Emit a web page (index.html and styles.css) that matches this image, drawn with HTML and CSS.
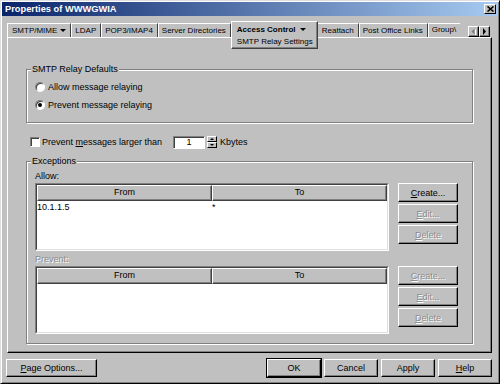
FILE: index.html
```html
<!DOCTYPE html>
<html lang="en">
<head>
    <meta charset="UTF-8">
    <title>Properties of WWWGWIA</title>
    <link rel="stylesheet" href="styles.css">
</head>
<body>
    <div class="window">
        <div class="titlebar">
            <span>Properties of WWWGWIA</span>
            <span class="close-btn">
                <svg width="7" height="6" viewBox="0 0 7 6"><path d="M0.5 0.5 L6.5 5.5 M6.5 0.5 L0.5 5.5" stroke="#000" stroke-width="1.6"/></svg>
            </span>
        </div>

        <div class="tabstrip">
            <div class="tab tab-first">SMTP/MIME <span class="caret"></span></div>
            <div class="tab">LDAP</div>
            <div class="tab">POP3/IMAP4</div>
            <div class="tab">Server Directories</div>
            <div class="tab tab-active">
                <div class="tab-main">Access Control <span class="caret"></span></div>
                <div>SMTP Relay Settings</div>
            </div>
            <div class="tab">Reattach</div>
            <div class="tab">Post Office Links</div>
            <div class="tab tab-clipped">Group\</div>
            <div class="tab-arrows">
                <span class="arrow-btn">
                    <svg width="5" height="7" viewBox="0 0 5 7"><path d="M3.5 0.5 L0.5 3.5 L3.5 6.5 Z" fill="#808080"/><path d="M4.5 1.5 L4.5 7" stroke="#fff"/></svg>
                </span>
                <span class="arrow-btn">
                    <svg width="5" height="7" viewBox="0 0 5 7"><path d="M1 0 L4 3.5 L1 7 Z" fill="#000"/></svg>
                </span>
            </div>
        </div>

        <div class="panel">
            <div class="group relay-group">
                <div class="group-title">SMTP Relay Defaults</div>
                <div class="option"><span class="radio"></span>Allow message relaying</div>
                <div class="option"><span class="radio checked"></span>Prevent message relaying</div>
            </div>

            <div class="size-row">
                <span class="checkbox"></span>
                <span>Prevent <u>m</u>essages larger than</span>
                <span class="spin-input">1</span>
                <span class="spin-btns">
                    <span class="spin-half"><span class="tri-up"></span></span>
                    <span class="spin-half"><span class="tri-down"></span></span>
                </span>
                <span class="unit">Kbytes</span>
            </div>

            <div class="group exceptions">
                <div class="group-title">Exceptions</div>

                <div class="list-label">Allow:</div>
                <div class="list-row">
                    <div class="list">
                        <div class="list-inner">
                            <div class="list-head">
                                <div class="head-cell">From</div>
                                <div class="head-cell">To</div>
                            </div>
                            <div class="list-item">
                                <div class="cell">10.1.1.5</div>
                                <div class="cell">*</div>
                            </div>
                        </div>
                    </div>
                    <div class="side-buttons">
                        <button class="btn"><u>C</u>reate...</button>
                        <button class="btn disabled"><u>E</u>dit...</button>
                        <button class="btn disabled"><u>D</u>elete</button>
                    </div>
                </div>

                <div class="list-label disabled-text">Prevent:</div>
                <div class="list-row">
                    <div class="list">
                        <div class="list-inner">
                            <div class="list-head">
                                <div class="head-cell">From</div>
                                <div class="head-cell">To</div>
                            </div>
                        </div>
                    </div>
                    <div class="side-buttons">
                        <button class="btn disabled"><u>C</u>reate...</button>
                        <button class="btn disabled"><u>E</u>dit...</button>
                        <button class="btn disabled"><u>D</u>elete</button>
                    </div>
                </div>
            </div>
        </div>

        <div class="footer">
            <button class="btn btn-wide"><u>P</u>age Options...</button>
            <div class="footer-right">
                <button class="btn btn-default">OK</button>
                <button class="btn">Cancel</button>
                <button class="btn">Apply</button>
                <button class="btn"><u>H</u>elp</button>
            </div>
        </div>
    </div>
</body>
</html>
```

FILE: styles.css
```css
body {
    margin: 0;
    background-color: #c0c0c0;
    font-family: "Liberation Sans", Arial, sans-serif;
    font-size: 9px;
    color: #000;
}

.window {
    width: 500px;
    height: 384px;
    box-sizing: border-box;
    border: 1px solid;
    border-color: #dfdfdf #000 #000 #dfdfdf;
    padding: 1px;
    box-shadow: inset 1px 1px #fff, inset -1px -1px #808080;
    background-color: #c0c0c0;
    display: flex;
    flex-direction: column;
}

/* title bar */
.titlebar {
    height: 14px;
    flex-shrink: 0;
    display: flex;
    align-items: center;
    justify-content: space-between;
    padding: 0 2px 0 3px;
    background: linear-gradient(to right, #0a246a, #a6caf0);
    color: #fff;
    font-weight: bold;
    font-size: 9.3px;
}
.close-btn {
    width: 12px;
    height: 10px;
    box-sizing: border-box;
    background-color: #c0c0c0;
    border: 1px solid;
    border-color: #fff #000 #000 #fff;
    display: flex;
    align-items: center;
    justify-content: center;
}

/* tabs */
.tabstrip {
    position: relative;
    z-index: 1;
    height: 16px;
    flex-shrink: 0;
    display: flex;
    align-items: flex-start;
    margin: 5px 6px 0 5px;
    font-size: 8px;
}
.tab {
    flex-shrink: 0;
    height: 14px;
    margin-top: 2px;
    box-sizing: border-box;
    padding: 0 4px;
    border-top: 1px solid #fff;
    border-right: 1px solid #404040;
    box-shadow: 1px 0 0 #fff;
    white-space: nowrap;
    display: flex;
    align-items: center;
    gap: 3px;
}
.tab-first {
    border-left: 1px solid #fff;
}
.tab-active {
    display: block;
    height: 28px;
    margin-top: 0;
    padding: 2px 4px 0 5px;
    border: 1px solid;
    border-color: #fff #404040 #404040 #fff;
    box-shadow: inset -1px -1px #808080;
    background-color: #c0c0c0;
    line-height: 11.5px;
}
.tab-main {
    display: flex;
    align-items: center;
    gap: 4px;
    font-weight: bold;
}
.tab-clipped {
    flex-shrink: 1;
    min-width: 0;
    overflow: hidden;
    display: block;
    line-height: 12px;
    border-right: none;
    box-shadow: none;
}
.caret {
    width: 0;
    height: 0;
    border-left: 3px solid transparent;
    border-right: 3px solid transparent;
    border-top: 3px solid #000;
}
.tab-arrows {
    flex-shrink: 0;
    display: flex;
    margin: 5px 2px 0 auto;
}
.arrow-btn {
    width: 11px;
    height: 11px;
    box-sizing: border-box;
    border: 1px solid;
    border-color: #fff #000 #000 #fff;
    box-shadow: inset -1px -1px #808080;
    display: flex;
    align-items: center;
    justify-content: center;
}

/* tab page */
.panel {
    flex: 1;
    margin: 0 6px 0 5px;
    border: 1px solid;
    border-color: #fff #000 #000 #fff;
    box-shadow: inset -1px -1px #808080;
    padding: 31px 18px 0 18px;
    display: flex;
    flex-direction: column;
}
.group {
    border: 1px solid #808080;
    box-shadow: inset 1px 1px #fff, 1px 1px #fff;
    display: flex;
    flex-direction: column;
}
.group-title {
    align-self: flex-start;
    margin: -6px 0 0 4px;
    padding: 0 1px;
    background-color: #c0c0c0;
    line-height: 11px;
}
.relay-group {
    padding: 0 0 10px 8px;
}
.relay-group .group-title {
    margin-left: -4px;
    margin-bottom: 1px;
}
.option {
    display: flex;
    align-items: center;
    gap: 3px;
    height: 14px;
    margin-top: 4px;
}
.radio {
    width: 10px;
    height: 10px;
    box-sizing: border-box;
    border-radius: 50%;
    border: 1px solid;
    border-color: #808080 #fff #fff #808080;
    box-shadow: inset 1px 1px #404040;
    background-color: #fff;
    display: flex;
    align-items: center;
    justify-content: center;
}
.radio.checked::after {
    content: "";
    width: 4px;
    height: 4px;
    border-radius: 50%;
    background-color: #000;
}

.size-row {
    display: flex;
    align-items: center;
    height: 14px;
    margin-top: 12px;
}
.checkbox {
    width: 10px;
    height: 10px;
    box-sizing: border-box;
    margin: 0 2px 0 4px;
    border: 1px solid;
    border-color: #808080 #fff #fff #808080;
    box-shadow: inset 1px 1px #404040;
    background-color: #fff;
}
.spin-input {
    width: 32px;
    height: 13px;
    box-sizing: border-box;
    margin-left: 11px;
    border: 1px solid;
    border-color: #808080 #fff #fff #808080;
    box-shadow: inset 1px 1px #404040;
    background-color: #fff;
    text-align: center;
    line-height: 11px;
}
.spin-btns {
    display: flex;
    flex-direction: column;
    margin-left: 2px;
}
.spin-half {
    width: 10px;
    height: 6px;
    box-sizing: border-box;
    border: 1px solid;
    border-color: #fff #000 #000 #fff;
    background-color: #c0c0c0;
    display: flex;
    align-items: center;
    justify-content: center;
}
.tri-up {
    border-left: 2px solid transparent;
    border-right: 2px solid transparent;
    border-bottom: 2px solid #000;
}
.tri-down {
    border-left: 2px solid transparent;
    border-right: 2px solid transparent;
    border-top: 2px solid #000;
}
.unit {
    margin-left: 3px;
}

/* exceptions */
.exceptions {
    margin-top: 12px;
    padding: 0 14px 9px 8px;
}
.exceptions .group-title {
    margin-left: -4px;
}
.list-label {
    margin-top: 4px;
    line-height: 11px;
}
.list-label.disabled-text {
    margin-top: 3px;
}
.disabled-text {
    color: #8c8c8c;
    text-shadow: 1px 1px #fff;
}
.list-row {
    display: flex;
    margin-top: 1px;
}
.list {
    flex: 1;
    height: 68px;
    box-sizing: border-box;
    border: 1px solid;
    border-color: #808080 #fff #fff #808080;
    background-color: #fff;
}
.list-inner {
    height: 100%;
    box-sizing: border-box;
    border: 1px solid;
    border-color: #404040 #dfdfdf #dfdfdf #404040;
}
.list-head {
    display: flex;
    height: 16px;
}
.head-cell {
    flex: 1;
    box-sizing: border-box;
    border: 1px solid;
    border-color: #fff #404040 #404040 #fff;
    box-shadow: inset -1px -1px #808080;
    background-color: #c0c0c0;
    text-align: center;
    line-height: 13px;
}
.list-item {
    display: flex;
    line-height: 12px;
}
.cell {
    flex: 1;
}
.side-buttons {
    width: 60px;
    margin-left: 9px;
    display: flex;
    flex-direction: column;
    gap: 2px;
}
.side-buttons .btn {
    height: 19px;
}

/* buttons */
.btn {
    font: inherit;
    color: #000;
    height: 18px;
    padding: 0;
    box-sizing: border-box;
    background-color: #c0c0c0;
    border: 1px solid;
    border-color: #fff #000 #000 #fff;
    box-shadow: inset -1px -1px #808080;
}
.btn.disabled {
    color: #8c8c8c;
    text-shadow: 1px 1px #fff;
}

.footer {
    display: flex;
    justify-content: space-between;
    flex-shrink: 0;
    margin: 6px 6px 5px 4px;
}
.btn-wide {
    width: 91px;
}
.footer-right {
    display: flex;
    gap: 3px;
}
.footer-right .btn {
    width: 54px;
}
.btn-default {
    outline: 1px solid #000;
}
```
